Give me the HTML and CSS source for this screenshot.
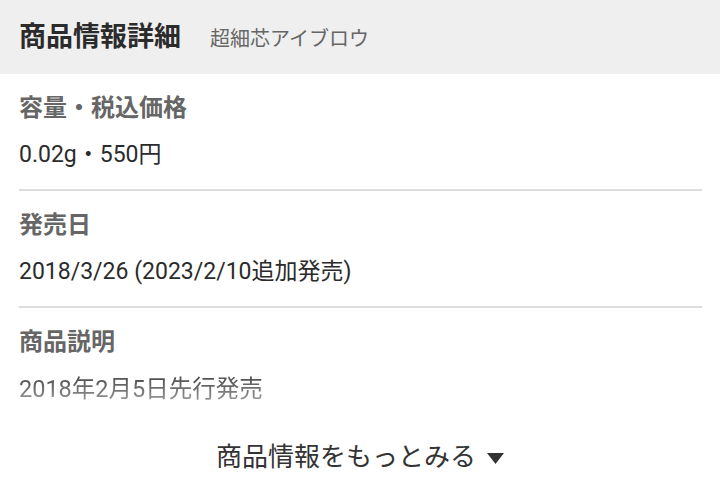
FILE: index.html
```html
<!DOCTYPE html>
<html lang="ja">
<head>
<meta charset="utf-8">
<link rel="stylesheet" href="styles.css">
</head>
<body>
<div class="header">
  <h1 class="title">商品情報詳細</h1>
  <span class="subtitle">超細芯アイブロウ</span>
</div>
<div class="sections">
  <div class="item">
    <div class="label">容量・税込価格</div>
    <div class="value">0.02g・550円</div>
  </div>
  <div class="item">
    <div class="label">発売日</div>
    <div class="value">2018/3/26 (2023/2/10追加発売)</div>
  </div>
  <div class="item last">
    <div class="label">商品説明</div>
    <div class="value fade">2018年2月5日先行発売</div>
  </div>
</div>
<div class="more">
  <span>商品情報をもっとみる</span>
  <svg class="caret" width="17" height="11" viewBox="0 0 17 11"><path d="M0 0H17L8.5 11Z" fill="#333"/></svg>
</div>
</body>
</html>
```
FILE: styles.css
```css
html, body {
  margin: 0;
  padding: 0;
  background: #fff;
  font-family: Roboto, "Noto Sans CJK JP", sans-serif;
  color: #333;
}
.header {
  background: #efefef;
  height: 74px;
  padding: 0 19px;
  display: flex;
  align-items: center;
  gap: 29px;
}
.title {
  margin: 0;
  font-size: 27px;
  font-weight: 700;
  color: #2b2b2b;
  line-height: 1;
}
.subtitle {
  font-size: 20px;
  color: #666;
  line-height: 1;
  padding-top: 3px;
}
.sections {
  padding: 0 18px 0 19px;
}
.item {
  padding: 18px 0 19px;
  border-bottom: 2px solid #ddd;
  display: flex;
  flex-direction: column;
  gap: 16px;
}
.item.last {
  border-bottom: none;
  padding-bottom: 0;
}
.label {
  font-size: 24px;
  font-weight: 700;
  color: #666;
  line-height: 32px;
}
.value {
  font-size: 23px;
  color: #2b2b2b;
  line-height: 30px;
}
.fade {
  font-size: 23.5px;
  color: #555;
  -webkit-mask-image: linear-gradient(to bottom, rgba(0,0,0,1) 20%, rgba(0,0,0,0.55) 100%);
  mask-image: linear-gradient(to bottom, rgba(0,0,0,1) 20%, rgba(0,0,0,0.55) 100%);
}
.more {
  margin-top: 33px;
  display: flex;
  justify-content: center;
  align-items: center;
  gap: 11px;
  font-size: 26px;
  line-height: 40px;
  color: #333;
}
.caret {
  display: block;
  margin-top: 2px;
}
```
